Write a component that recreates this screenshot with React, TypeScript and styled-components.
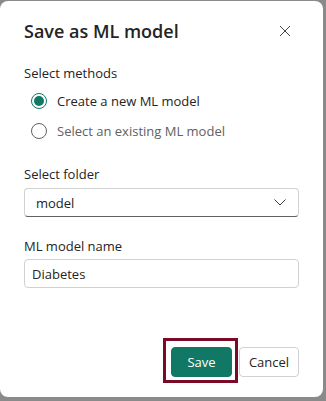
import styled, { createGlobalStyle } from 'styled-components';

const GlobalStyle = createGlobalStyle`
  html, body {
    margin: 0;
    padding: 0;
    height: 401px;
    overflow: hidden;
    background: #8a8a8a;
  }
  * {
    box-sizing: border-box;
  }
`;

const FONT = `'Open Sans', 'Noto Sans', sans-serif`;

const Page = styled.div`
  padding-top: 1px;
  width: 323px;
  font-family: ${FONT};
`;

const Dialog = styled.div`
  width: 323px;
  height: 396px;
  background: #ffffff;
  border-radius: 8px;
  padding: 17px 24px 20px 24px;
  display: flex;
  flex-direction: column;
`;

const Header = styled.div`
  display: flex;
  align-items: center;
  justify-content: space-between;
  height: 26px;
`;

const Title = styled.h2`
  margin: 0;
  font-size: 18px;
  line-height: 26px;
  font-weight: 600;
  color: #242424;
`;

const CloseButton = styled.button`
  display: flex;
  align-items: center;
  justify-content: center;
  width: 20px;
  height: 20px;
  margin-right: 4px;
  padding: 0;
  border: none;
  background: transparent;
  color: #424242;
`;

const Label = styled.div<{ $top: number }>`
  margin-top: ${({ $top }) => $top}px;
  font-size: 13px;
  line-height: 20px;
  color: #242424;
`;

const RadioGroup = styled.div`
  margin-top: 3px;
  display: flex;
  flex-direction: column;
`;

const RadioRow = styled.label<{ $checked?: boolean }>`
  display: flex;
  align-items: center;
  gap: 10px;
  height: 30px;
  padding-left: 7px;
  font-size: 13px;
  color: ${({ $checked }) => ($checked ? '#242424' : '#616161')};
`;

const RadioCircle = styled.span<{ $checked?: boolean }>`
  width: 16px;
  height: 16px;
  border-radius: 50%;
  border: 1px solid ${({ $checked }) => ($checked ? '#117865' : '#616161')};
  display: flex;
  align-items: center;
  justify-content: center;
  &::after {
    content: '';
    display: ${({ $checked }) => ($checked ? 'block' : 'none')};
    width: 10px;
    height: 10px;
    border-radius: 50%;
    background: #117865;
  }
`;

const Dropdown = styled.div`
  margin-top: 4px;
  height: 29px;
  border: 1px solid #d1d1d1;
  border-bottom-color: #616161;
  border-radius: 4px;
  display: flex;
  align-items: center;
  justify-content: space-between;
  padding: 0 12px 0 11px;
  font-size: 13px;
  color: #242424;
`;

const TextInput = styled.div`
  margin-top: 3px;
  height: 29px;
  border: 1px solid #d1d1d1;
  border-radius: 4px;
  display: flex;
  align-items: center;
  padding: 0 7px;
  font-size: 13px;
  color: #242424;
`;

const Footer = styled.div`
  margin-top: auto;
  display: flex;
  justify-content: flex-end;
  gap: 7px;
`;

const Highlight = styled.div`
  position: relative;
  &::after {
    content: '';
    position: absolute;
    top: -9px;
    left: -8px;
    right: -6px;
    bottom: -6px;
    border: 3px solid #7b0a26;
    pointer-events: none;
  }
`;

const Button = styled.button<{ $primary?: boolean }>`
  height: 30px;
  width: ${({ $primary }) => ($primary ? '61px' : '60px')};
  border-radius: 4px;
  font-family: ${FONT};
  font-size: 13px;
  padding: 0;
  border: 1px solid ${({ $primary }) => ($primary ? '#117865' : '#d1d1d1')};
  background: ${({ $primary }) => ($primary ? '#117865' : '#ffffff')};
  color: ${({ $primary }) => ($primary ? '#ffffff' : '#242424')};
`;

const BehindText = styled.div`
  margin-top: 2px;
  padding-left: 2px;
  font-family: ${FONT};
  font-size: 13px;
  line-height: 16px;
  color: #2a2a2a;
  letter-spacing: 1px;
`;

export default function App() {
  return (
    <>
      <GlobalStyle />
      <Page>
        <Dialog>
          <Header>
            <Title>Save as ML model</Title>
            <CloseButton aria-label="Close">
              <svg width="12" height="12" viewBox="0 0 12 12" fill="none">
                <path d="M1 1L11 11M11 1L1 11" stroke="currentColor" strokeWidth="1" />
              </svg>
            </CloseButton>
          </Header>

          <Label $top={19}>Select methods</Label>
          <RadioGroup>
            <RadioRow $checked>
              <RadioCircle $checked />
              Create a new ML model
            </RadioRow>
            <RadioRow>
              <RadioCircle />
              Select an existing ML model
            </RadioRow>
          </RadioGroup>

          <Label $top={18}>Select folder</Label>
          <Dropdown>
            <span>model</span>
            <svg width="12" height="7" viewBox="0 0 12 7" fill="none">
              <path d="M0.5 0.5L6 6L11.5 0.5" stroke="#424242" strokeWidth="1" />
            </svg>
          </Dropdown>

          <Label $top={19}>ML model name</Label>
          <TextInput>Diabetes</TextInput>

          <Footer>
            <Highlight>
              <Button $primary>Save</Button>
            </Highlight>
            <Button>Cancel</Button>
          </Footer>
        </Dialog>
        <BehindText>ML model name</BehindText>
      </Page>
    </>
  );
}
